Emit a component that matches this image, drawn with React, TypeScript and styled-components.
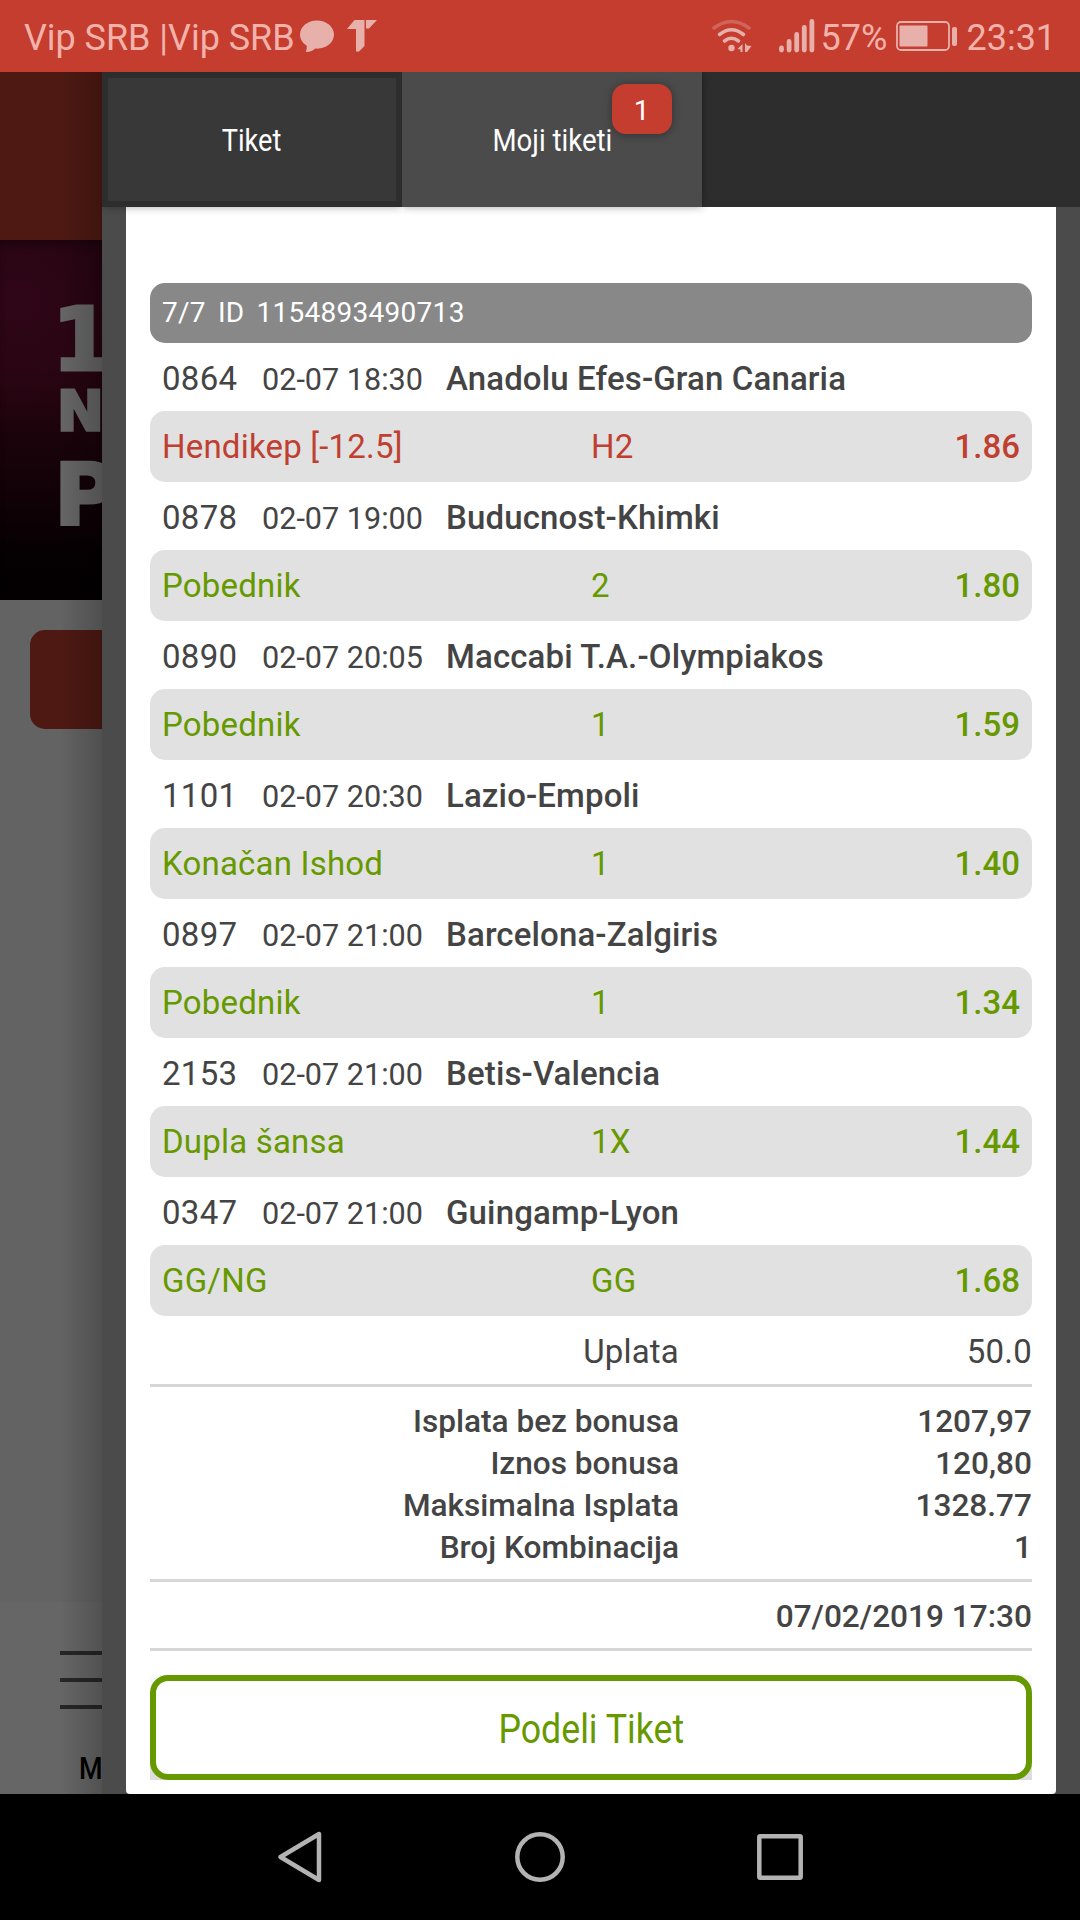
import React from 'react';
import styled, { createGlobalStyle } from 'styled-components';

const GlobalStyle = createGlobalStyle`
  * { box-sizing: border-box; }
  body { margin: 0; background: #000; font-family: Roboto, "Noto Sans", sans-serif; }
`;

const Screen = styled.div`
  width: 1080px;
  height: 1920px;
  display: flex;
  flex-direction: column;
  overflow: hidden;
`;

/* ---------- status bar ---------- */

const StatusBar = styled.header`
  height: 72px;
  flex: none;
  display: flex;
  align-items: center;
  background: #c43d2f;
  color: #f1b2aa;
  font-size: 36px;
  line-height: 72px;
  white-space: pre;
  padding: 4px 24px 0 24px;
`;

const Grow = styled.span`
  flex: 1;
`;

const StatusText = styled.span<{ $w?: number; $ml?: number }>`
  width: ${(p) => (p.$w ? p.$w + 'px' : 'auto')};
  margin-left: ${(p) => p.$ml ?? 0}px;
  letter-spacing: -0.05px;
`;

const StatusIcon = styled.svg<{ $ml?: number }>`
  flex: none;
  margin-left: ${(p) => p.$ml ?? 0}px;
  margin-top: -4px;
`;

/* ---------- page behind the drawer ---------- */

const Main = styled.main`
  height: 1722px;
  flex: none;
  display: flex;
`;

const Peek = styled.aside`
  width: 102px;
  flex: none;
  position: relative;
  display: flex;
  flex-direction: column;
  overflow: hidden;
  background: #636363;
  &::after {
    content: '';
    position: absolute;
    inset: 0 0 0 60px;
    background: linear-gradient(to right, rgba(0, 0, 0, 0), rgba(0, 0, 0, 0.2));
  }
`;

const PeekHeader = styled.div`
  height: 168px;
  flex: none;
  background: #4e1913;
`;

const Banner = styled.div`
  height: 360px;
  flex: none;
  padding: 59px 0 0 60px;
  background: radial-gradient(120px 130px at 20px 60px, #2f0618, rgba(47, 6, 24, 0)),
    linear-gradient(#24040f, #26040f 35%, #150209 65%, #050002 88%, #030001);
  color: #666;
  font-family: "DejaVu Sans", sans-serif;
  font-weight: 700;
  display: flex;
  flex-direction: column;
  box-shadow: inset 0 8px 8px -4px rgba(0, 0, 0, 0.35);
`;

const BannerLine = styled.span<{ $size: number; $h: number; $ml: number; $mt?: number }>`
  margin-left: ${(p) => p.$ml}px;
  margin-top: ${(p) => p.$mt ?? 0}px;
  font-size: ${(p) => p.$size}px;
  height: ${(p) => p.$h}px;
  line-height: ${(p) => p.$h}px;
  white-space: nowrap;
  -webkit-text-stroke: 3px #666;
`;

const PeekButton = styled.div`
  width: 200px;
  height: 99px;
  flex: none;
  margin: 30px 0 0 30px;
  border-radius: 15px;
  background: #4e1913;
`;

const PeekFooter = styled.div`
  margin-top: auto;
  height: 192px;
  flex: none;
  padding: 49px 0 0 60px;
  background: #666;
`;

const BurgerLine = styled.div`
  height: 4px;
  margin-bottom: 23px;
  background: #262626;
`;

const PeekLabel = styled.div`
  margin: 42px 0 0 19px;
  font-size: 31px;
  line-height: 36px;
  font-weight: 500;
  color: #000;
  transform: scaleX(0.87);
  transform-origin: left;
`;

/* ---------- drawer ---------- */

const Drawer = styled.section`
  flex: 1;
  display: flex;
  flex-direction: column;
  background: #4b4b4b;
`;

const Tabs = styled.nav`
  height: 135px;
  flex: none;
  display: flex;
  background: #2d2d2d;
`;

const Tab = styled.div<{ $active?: boolean }>`
  position: relative;
  z-index: 1;
  width: 300px;
  display: flex;
  align-items: center;
  justify-content: center;
  border: ${(p) => (p.$active ? 'none' : '6px solid #2d2d2d')};
  background: ${(p) => (p.$active ? '#4b4b4b' : '#383838')};
  box-shadow: 0 0 8px rgba(0, 0, 0, 0.35);
  clip-path: ${(p) => (p.$active ? 'inset(0 -10px -10px 0)' : 'inset(0 0 -10px 0)')};
`;

const Condensed = styled.span<{ $size: number; $scale: number }>`
  font-size: ${(p) => p.$size}px;
  font-weight: 450;
  transform: scaleX(${(p) => p.$scale});
  white-space: nowrap;
`;

const TabLabel = styled(Condensed)`
  color: #fff;
  padding-top: 2px;
`;

const Badge = styled.span`
  position: absolute;
  left: 210px;
  top: 12px;
  width: 60px;
  height: 50px;
  border-radius: 14px;
  background: #c43d2f;
  box-shadow: 0 1px 8px rgba(0, 0, 0, 0.35);
  color: #fff;
  font-size: 28px;
  line-height: 53px;
  text-align: center;
  padding-right: 1px;
`;

const Sheet = styled.div`
  flex: 1;
  margin: 0 24px;
  padding: 76px 24px 14px;
  display: flex;
  flex-direction: column;
  background: #fff;
  border-radius: 0 0 4px 4px;
  color: #444;
`;

const TicketHead = styled.div`
  height: 60px;
  flex: none;
  display: flex;
  align-items: center;
  gap: 12px;
  padding: 0 12px 2px;
  border-radius: 15px;
  background: #888;
  color: #fff;
  font-size: 28px;
  letter-spacing: 0.28px;
`;

const Match = styled.div`
  height: 68px;
  flex: none;
  display: flex;
  align-items: baseline;
  padding: 0 12px;
  line-height: 72px;
  white-space: nowrap;
`;

const Code = styled.span`
  width: 100px;
  font-size: 33px;
  letter-spacing: 0.3px;
`;

const Kickoff = styled.span`
  width: 184px;
  font-size: 30.6px;
`;

const Teams = styled.span`
  font-size: 33px;
  font-weight: 500;
  letter-spacing: 0.13px;
`;

const Pick = styled.div<{ $lost?: boolean }>`
  height: 71px;
  flex: none;
  display: flex;
  padding: 0 12px;
  border-radius: 15px;
  background: #e1e1e1;
  color: ${(p) => (p.$lost ? '#bf3f31' : '#669900')};
  font-size: 33px;
  line-height: 72px;
  letter-spacing: 0.2px;
`;

const Market = styled.span`
  width: 429px;
`;

const Choice = styled.span`
  flex: 1;
`;

const Odds = styled.span`
  font-weight: 500;
  letter-spacing: 0;
`;

const Summary = styled.div<{ $h: number; $pt: number }>`
  height: ${(p) => p.$h}px;
  padding-top: ${(p) => p.$pt}px;
  flex: none;
  border-bottom: 3px solid #d6d6d6;
`;

const SumRow = styled.div<{ $big?: boolean }>`
  display: grid;
  grid-template-columns: 529px 1fr;
  text-align: right;
  line-height: 42px;
  font-size: ${(p) => (p.$big ? 33 : 31.6)}px;
  letter-spacing: ${(p) => (p.$big ? 0.2 : 0)}px;
  font-weight: ${(p) => (p.$big ? 400 : 500)};
`;

const ShareWrap = styled.div`
  margin-top: 24px;
  height: 105px;
  flex: none;
  background: linear-gradient(#fafafa, #dcdcdc);
`;

const Share = styled.div`
  height: 105px;
  display: flex;
  align-items: center;
  justify-content: center;
  padding-top: 2px;
  border: 6px solid #669900;
  border-radius: 18px;
  background: #fff;
  color: #669900;
`;

/* ---------- system navigation ---------- */

const NavBar = styled.footer`
  height: 126px;
  flex: none;
  display: flex;
  align-items: center;
  justify-content: center;
  gap: 180px;
  background: #000;
`;

const games = [
  ['0864', '02-07 18:30', 'Anadolu Efes-Gran Canaria', 'Hendikep [-12.5]', 'H2', '1.86', true],
  ['0878', '02-07 19:00', 'Buducnost-Khimki', 'Pobednik', '2', '1.80', false],
  ['0890', '02-07 20:05', 'Maccabi T.A.-Olympiakos', 'Pobednik', '1', '1.59', false],
  ['1101', '02-07 20:30', 'Lazio-Empoli', 'Konačan Ishod', '1', '1.40', false],
  ['0897', '02-07 21:00', 'Barcelona-Zalgiris', 'Pobednik', '1', '1.34', false],
  ['2153', '02-07 21:00', 'Betis-Valencia', 'Dupla šansa', '1X', '1.44', false],
  ['0347', '02-07 21:00', 'Guingamp-Lyon', 'GG/NG', 'GG', '1.68', false],
] as const;

const totals = [
  ['Isplata bez bonusa', '1207,97'],
  ['Iznos bonusa', '120,80'],
  ['Maksimalna Isplata', '1328.77'],
  ['Broj Kombinacija', '1'],
];

export default function App() {
  return (
    <Screen>
      <GlobalStyle />
      <StatusBar>
        <StatusText $w={276}>Vip SRB |Vip SRB</StatusText>
        <StatusIcon width="34" height="33" viewBox="0 0 34 33" fill="#e8b0aa">
          <path d="M17 .5C7.600.5 0 6.800 0 14.600c0 4.600 2.600 8.600 6.700 11.100.3 2.400-.3 4.700-1 6.400 4 .2 7.300-1.300 9.500-3.500 10.500.8 18.800-5.700 18.800-14C34 6.800 26.400.5 17 .5z" />
        </StatusIcon>
        <StatusIcon $ml={13} width="30" height="32" viewBox="0 0 30 32" fill="#e8b0aa">
          <path d="M7.500 0H17.500v26l-5.500 5.500H9V9H0zM19 0h11l-8 8.500h-3z" />
        </StatusIcon>
        <Grow />
        <StatusIcon width="40" height="34" viewBox="0 0 40 34" fill="none" stroke="#e8b0aa" strokeWidth="3.600" strokeLinecap="round">
          <path d="M2 9Q19.500-4 37 9" opacity=".35" />
          <path d="M7.500 15.500q12-9.500 24 0M12.500 22q7-5.500 14 0" />
          <circle cx="19.500" cy="29" r="3.200" fill="#e8b0aa" stroke="none" />
          <path d="M30.500 25v8h-2v-2.500l-3-.5zM33 24v9l2 0 4.500-6-4.500-.5z" fill="#e8b0aa" stroke="none" />
        </StatusIcon>
        <StatusIcon $ml={27} width="36" height="34" viewBox="0 0 36 34" stroke="#e8b0aa" strokeWidth="4.800" strokeLinecap="round">
          <path d="M2.500 29v2M10.100 22.500V31M17.700 15.500V31M25.300 8.500V31M32.900 2.500V31" />
        </StatusIcon>
        <StatusText $w={84} $ml={-3}> 57%</StatusText>
        <StatusIcon width="62" height="30" viewBox="0 0 62 30">
          <rect x="1" y="1" width="52" height="28" rx="4" fill="none" stroke="#e8b0aa" strokeWidth="1.800" />
          <rect x="3.500" y="4.500" width="28" height="21" rx="1" fill="#e8b0aa" />
          <rect x="56" y="6" width="5" height="19" rx="2" fill="#e8b0aa" />
        </StatusIcon>
        <StatusText> 23:31</StatusText>
      </StatusBar>

      <Main>
        <Peek>
          <PeekHeader />
          <Banner>
            <BannerLine $size={87} $h={83} $ml={-8}>1</BannerLine>
            <BannerLine $size={56} $h={57} $ml={-3}>N</BannerLine>
            <BannerLine $size={86} $h={89} $ml={-6} $mt={12}>P</BannerLine>
          </Banner>
          <PeekButton />
          <PeekFooter>
            <BurgerLine />
            <BurgerLine />
            <BurgerLine />
            <PeekLabel>M</PeekLabel>
          </PeekFooter>
        </Peek>

        <Drawer>
          <Tabs>
            <Tab>
              <TabLabel $size={31.5} $scale={0.86}>Tiket</TabLabel>
            </Tab>
            <Tab $active>
              <TabLabel $size={31.5} $scale={0.875}>Moji tiketi</TabLabel>
              <Badge>1</Badge>
            </Tab>
          </Tabs>
          <Sheet>
            <TicketHead>
              <span>7/7</span>
              <span>ID</span>
              <span>1154893490713</span>
            </TicketHead>
            {games.map(([code, time, teams, market, choice, odds, lost]) => (
              <React.Fragment key={code}>
                <Match>
                  <Code>{code}</Code>
                  <Kickoff>{time}</Kickoff>
                  <Teams>{teams}</Teams>
                </Match>
                <Pick $lost={lost}>
                  <Market>{market}</Market>
                  <Choice>{choice}</Choice>
                  <Odds>{odds}</Odds>
                </Pick>
              </React.Fragment>
            ))}
            <Summary $h={71} $pt={15}>
              <SumRow $big>
                <span>Uplata</span>
                <span>50.0</span>
              </SumRow>
            </Summary>
            <Summary $h={195} $pt={14}>
              {totals.map(([label, value]) => (
                <SumRow key={label}>
                  <span>{label}</span>
                  <span>{value}</span>
                </SumRow>
              ))}
            </Summary>
            <Summary $h={69} $pt={14}>
              <SumRow>
                <span />
                <span>07/02/2019 17:30</span>
              </SumRow>
            </Summary>
            <ShareWrap>
              <Share>
                <Condensed $size={40.5} $scale={0.882}>Podeli Tiket</Condensed>
              </Share>
            </ShareWrap>
          </Sheet>
        </Drawer>
      </Main>

      <NavBar>
        <svg width="60" height="60" viewBox="0 0 60 60" fill="none" stroke="#b3b3b3" strokeWidth="4.500" strokeLinejoin="round">
          <path d="M49 7v46L10.500 30z" />
        </svg>
        <svg width="60" height="60" viewBox="0 0 60 60" fill="none" stroke="#b3b3b3" strokeWidth="4.500">
          <circle cx="30" cy="30" r="22.700" />
        </svg>
        <svg width="60" height="60" viewBox="0 0 60 60" fill="none" stroke="#b3b3b3" strokeWidth="4.500" strokeLinejoin="round">
          <rect x="9.300" y="9.300" width="41.400" height="41.400" rx="1" />
        </svg>
      </NavBar>
    </Screen>
  );
}
